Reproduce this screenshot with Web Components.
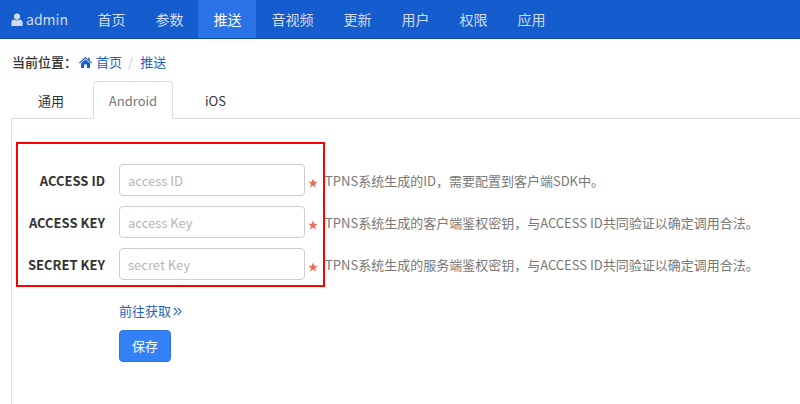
<!DOCTYPE html>
<html lang="zh"><head><meta charset="utf-8"><title>推送</title>
<style>
html,body{margin:0;padding:0;background:#fff;overflow:hidden}
body{font:14px/20px "Noto Sans CJK SC","Noto Sans",sans-serif;color:#333;height:404px}
</style></head><body>
<app-nav active="推送"></app-nav>
<app-crumb></app-crumb>
<app-tabs></app-tabs>
<app-panel>
  <red-frame>
    <key-row label="ACCESS ID" ph="access ID">TPNS系统生成的ID，需要配置到客户端SDK中。</key-row>
    <key-row label="ACCESS KEY" ph="access Key">TPNS系统生成的客户端鉴权密钥，与ACCESS ID共同验证以确定调用合法。</key-row>
    <key-row label="SECRET KEY" ph="secret Key">TPNS系统生成的服务端鉴权密钥，与ACCESS ID共同验证以确定调用合法。</key-row>
  </red-frame>
  <form-foot></form-foot>
</app-panel>
<script>
function def(name,html){
  customElements.define(name,class extends HTMLElement{
    constructor(){super();this.attachShadow({mode:'open'}).innerHTML=typeof html==='function'?html(this):html}
  });
}
const userIcon='<svg width="12" height="13" viewBox="0 0 12 13"><circle cx="6" cy="3.6" r="3.1" fill="currentColor"/><path d="M0.4 12.4V9.6C0.4 7.8 1.7 6.6 3.2 6.4 4 7 5 7.3 6 7.3S8 7 8.8 6.4C10.3 6.6 11.6 7.8 11.6 9.6V12.4C11.6 12.8 11.3 13 11 13H1C0.7 13 .4 12.8 .4 12.4Z" fill="currentColor"/></svg>';
const homeIcon='<svg width="13" height="11" viewBox="0 0 13 11"><path d="M6.5 0 0 5.6l.7.8L6.5 1.5l5.8 4.9.7-.8L10.8 3.7V.8H9.2v1.6Z" fill="currentColor"/><path d="M2 6.2 6.5 2.5 11 6.2V11H7.9V7.6H5.1V11H2Z" fill="currentColor"/></svg>';
const items=['首页','参数','推送','音视频','更新','用户','权限','应用'];
def('app-nav',`<style>
:host{display:flex;height:38px;background:#155cce;border-bottom:1px solid #0c4a9e;color:#d3dcec;font-size:14px;line-height:38px}
.u{display:flex;align-items:center;gap:3px;padding-left:11px;width:71.4px;flex:none}
.u svg{display:block}
a{display:block;padding:0 15px;width:28px;flex:none;white-space:nowrap}
a.w{width:42px}
a.on{background:#2a73e6;color:#fff}
</style><div class="u">${userIcon}<span>admin</span></div>`+items.map(t=>`<a class="${t==='推送'?'on':''} ${t.length>2?'w':''}">${t}</a>`).join(''));
def('app-crumb',`<style>
:host{display:flex;align-items:center;height:20px;margin:13px 0 0 12px;font-size:13px;color:#333}
b{font-weight:500;width:67px}
a{color:#1e5fc4;display:flex;align-items:center;gap:4px}
i{color:#ccc;font-style:normal;padding:0 7px 0 6px}
svg{display:block}
</style><b>当前位置：</b><a>${homeIcon}<span>首页</span></a><i>/</i><a>推送</a>`);
def('app-tabs',`<style>
:host{display:flex;height:37px;margin:9px 0 0 12px;padding-left:11px;font-size:13px;box-sizing:border-box}
a{display:block;box-sizing:border-box;height:38px;line-height:38px;text-align:center;border:1px solid transparent;color:#333}
.a{width:56px;margin-right:14px;}
.b{width:80px;border-color:#ddd #ddd #fff;border-radius:4px 4px 0 0;color:#777;background:#fff;position:relative;z-index:1;line-height:37px}
.c{width:85px}
</style><a class="a">通用</a><a class="b">Android</a><a class="c">iOS</a>`);
def('app-panel',`<style>
:host{display:block;margin-left:11px;border-top:1px solid #ddd;border-left:1px solid #ddd;padding:23px 0 0 4px;height:300px;box-sizing:border-box}
</style><slot></slot>`);
def('red-frame',`<style>
:host{display:flex;flex-direction:column;gap:10px;box-sizing:border-box;width:309px;height:145px;border:2px solid #f00;padding:20px 0 0 0;overflow:visible}
</style><slot></slot>`);
def('key-row',el=>`<style>
:host{display:flex;align-items:center;height:32px;white-space:nowrap}
label{width:87px;text-align:right;font-weight:700;font-size:13px;color:#333;flex:none;margin-top:2px}
.in{flex:none;box-sizing:border-box;width:186px;height:32px;margin-left:14px;border:1px solid #ccc;border-radius:4px;padding:0 8px;font:inherit;font-size:13px;color:#333;background:#fff;outline:0}
.in::placeholder{color:#b5b5b5;opacity:1}
.s{color:#ee6a55;width:18px;flex:none;margin-top:3px}
.s svg{display:block;margin:2px auto 0 3px}
.h{color:#777;font-size:13px;margin-left:2px;margin-top:2px}
</style><label>${el.getAttribute('label')||''}</label><input class="in" placeholder="${el.getAttribute('ph')||''}"><span class="s"><svg width="10" height="10" viewBox="0 0 10 10"><path d="M5 .3 6.2 3.7 9.8 3.8 6.9 6 8 9.5 5 7.4 2 9.5 3.1 6 .2 3.8 3.8 3.7Z" fill="currentColor"/></svg></span><span class="h"><slot></slot></span>`);
def('form-foot',`<style>
:host{display:block;margin:14px 0 0 103px;height:70px}
a{display:flex;align-items:center;gap:2px;height:20px;color:#1e5fc4;font-size:13px}
button{display:block;box-sizing:border-box;margin-top:9px;width:52px;height:32px;background:#3480f6;color:#fff;border:1px solid #2a72e0;border-radius:4px;font:inherit;font-size:13px;padding:0}
</style><a>前往获取<svg width="9" height="9" viewBox="0 0 9 9" fill="none" stroke="currentColor" stroke-width="1.1"><path d="M.8.8 4.2 4.5.8 8.2M4.6.8 8 4.5 4.6 8.2"/></svg></a><button>保存</button>`);
</script>
</body></html>
